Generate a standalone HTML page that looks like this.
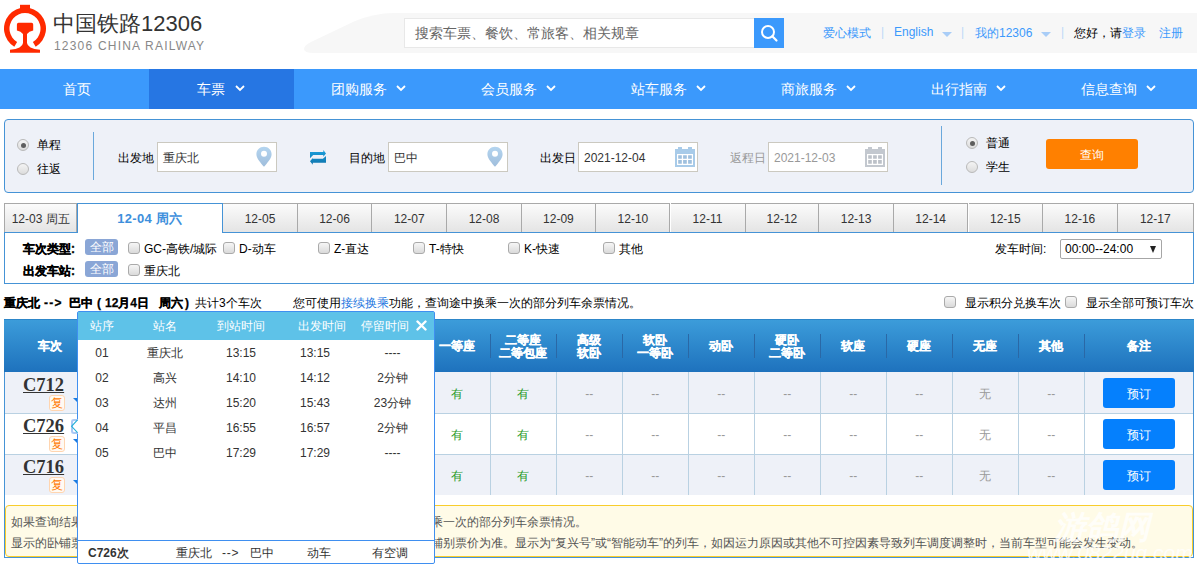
<!DOCTYPE html>
<html><head><meta charset="utf-8">
<style>
*{margin:0;padding:0;box-sizing:border-box}
html,body{width:1197px;height:567px;overflow:hidden;background:#fff}
body{font-family:"Liberation Sans",sans-serif;font-size:12px;color:#333;position:relative}
.a{position:absolute;white-space:nowrap}
/* header */
#hdr{position:absolute;left:0;top:0;width:1197px;height:69px;background:#fff}
#nav{position:absolute;left:0;top:69px;width:1197px;height:40px;background:#3b99fc}
#nav .it{position:absolute;top:0;height:40px;line-height:40px;color:#fff;font-size:14px;text-align:center}
#nav .act{background:#2676e3}
.chev{display:inline-block;width:7px;height:7px;border-right:2px solid #fff;border-bottom:2px solid #fff;transform:rotate(45deg);margin-left:10px;position:relative;top:-3px}

#sbox{position:absolute;left:4px;top:119px;width:1190px;height:74px;border:1px solid #4593d6;border-radius:4px;background:#eef1f8}
.lbl{position:absolute;font-size:12px;color:#000;white-space:nowrap;line-height:16px}
.inp{position:absolute;top:142px;height:30px;width:120px;border:1px solid #cbc9c0;background:#fff;font-size:12px;line-height:30px;padding-left:5px;color:#333}
.radio{position:absolute;width:12px;height:12px;border-radius:50%;border:1px solid #b9b9b9;background:linear-gradient(#f4f4f4,#dcdcdc)}
.radio.on::after{content:"";position:absolute;left:2.5px;top:2.5px;width:5px;height:5px;border-radius:50%;background:#5e5e5e}
.vdiv{position:absolute;width:1px;background:#6aa8dc}

.tab{position:absolute;top:203px;height:30px;border:1px solid #a9a9a9;border-left:0;border-bottom:0;background:linear-gradient(#fbfbfb,#e4e4e4);text-align:center;line-height:31px;font-size:12px;color:#333}
#fpanel{position:absolute;left:4px;top:232px;width:1190px;height:52px;border:1px solid #4593d6;background:#fff}
.flbl{position:absolute;font-size:12px;font-weight:bold;color:#000;-webkit-text-stroke:0.3px #000;line-height:14px}
.badge{position:absolute;left:85px;width:33px;height:16px;background:#8aa6d6;border-radius:3px;color:#fff;font-size:12px;line-height:16px;text-align:center}
.cb{position:absolute;width:12px;height:12px;border:1px solid #aaa;border-radius:3px;background:linear-gradient(#f6f6f6,#dadada)}
.ctx{position:absolute;font-size:12px;color:#000;line-height:14px}

.t12{position:absolute;font-size:12px;line-height:14px;white-space:nowrap;color:#000}
#rbox{position:absolute;left:4px;top:319px;width:1190px;height:239px;border:1px solid #4593d6;border-top:0}
#thead{position:absolute;left:4px;top:319px;width:1190px;height:53px;background:linear-gradient(#3c9cda,#1e72bd);border-top:1px solid #2d86c9}
.th{position:absolute;font-size:12px;font-weight:bold;color:#fff;-webkit-text-stroke:0.3px #fff;text-align:center;line-height:13px;white-space:nowrap}
.hsep{position:absolute;top:334px;width:1px;height:24px;background:#2a68a6}
.row{position:absolute;left:5px;width:1188px;height:41px}
.vl{position:absolute;width:1px;background:#b9d1e2}
.cell{position:absolute;font-size:12px;text-align:center;line-height:14px;white-space:nowrap}
.bk{position:absolute;left:1103px;width:72px;height:30px;background:#0580fd;border-radius:3px;color:#fff;font-size:12px;line-height:32px;text-align:center}
.tn{position:absolute;left:23px;font-family:"Liberation Serif",serif;font-weight:bold;font-size:18.5px;line-height:18px;color:#333;text-decoration:underline;text-underline-offset:1px}
.fu{position:absolute;left:49px;width:16px;height:16px;border:1px solid #ffd5b0;border-radius:3px;background:#fffaf3;color:#ff7a00;font-size:12px;line-height:14px;text-align:center}
.tri{position:absolute;left:73px;width:0;height:0;border-top:4px solid #1a7be0;border-left:4px solid transparent}

#pop{position:absolute;left:77px;top:311px;width:358px;height:253px;border:1px solid #3f8ff0;border-radius:2px;background:#fff}
#phead{position:absolute;left:78px;top:312px;width:356px;height:28px;background:#5ec2e8}
.pc{position:absolute;font-size:12px;line-height:14px;text-align:center;white-space:nowrap;color:#333}
.ph{color:#fff}
</style></head><body>
<div id="hdr">
  <svg class="a" style="left:0;top:0" width="50" height="56" viewBox="0 0 50 56">
    <rect x="20" y="4.8" width="10" height="5" fill="#ff2a00"/><path fill="#ff2a00" d="M35.69,46.68 A21,21 0 1 0 14.31,46.68 L17.11,41.94 A15.5,15.5 0 1 1 32.89,41.94 Z"/>
    <path fill="#ff2a00" d="M18.5,22.8 H31.6 Q33.2,22.8 33.2,24.4 V30.6 Q29,31.5 27,34 V43 Q27.5,48.5 40,49.8 V52.8 H10 V49.8 Q22.5,48.5 23,43 V34 Q21,31.5 16.9,30.6 V24.4 Q16.9,22.8 18.5,22.8 Z"/>
  </svg>
  <div class="a" style="left:53px;top:9px;font-size:22px;color:#333;letter-spacing:0">中国铁路12306</div>
  <div class="a" style="left:54px;top:39px;font-size:12px;color:#888;letter-spacing:1.2px">12306 CHINA RAILWAY</div>
  <svg class="a" style="left:300px;top:12px" width="897" height="42" viewBox="0 0 897 42">
    <path fill="#f7f7f7" d="M897,1 H94 Q74,1 54,9.5 L11,30 Q4,33.5 4,37 Q4,40.8 14,41 H897 Z"/>
  </svg>
  <div class="a" style="left:404px;top:18px;width:350px;height:30px;background:#fff;border:1px solid #e8e8e8;border-right:0"></div>
  <div class="a" style="left:415px;top:18px;height:30px;line-height:30px;font-size:14px;color:#666">搜索车票、餐饮、常旅客、相关规章</div>
  <div class="a" style="left:754px;top:18px;width:30px;height:30px;background:#3b99fc">
    <svg width="30" height="30" viewBox="0 0 30 30"><circle cx="14" cy="14" r="6" fill="none" stroke="#fff" stroke-width="2"/><path d="M18.3,18.3 L22.5,22.5" stroke="#fff" stroke-width="2.2" stroke-linecap="round"/></svg>
  </div>
  <div class="a" style="left:823px;top:25px;font-size:12px;color:#3b99fc">爱心模式</div>
  <div class="a" style="left:881px;top:25px;font-size:12px;color:#bcd9f8">|</div>
  <div class="a" style="left:894px;top:25px;font-size:12px;color:#3b99fc">English</div>
  <div class="a" style="left:942px;top:32px;width:0;height:0;border-left:5px solid transparent;border-right:5px solid transparent;border-top:5px solid #a9cdf7"></div>
  <div class="a" style="left:961px;top:25px;font-size:12px;color:#bcd9f8">|</div>
  <div class="a" style="left:975px;top:25px;font-size:12px;color:#3b99fc">我的12306</div>
  <div class="a" style="left:1041px;top:32px;width:0;height:0;border-left:5px solid transparent;border-right:5px solid transparent;border-top:5px solid #a9cdf7"></div>
  <div class="a" style="left:1061px;top:25px;font-size:12px;color:#bcd9f8">|</div>
  <div class="a" style="left:1074px;top:25px;font-size:12px;color:#000">您好，请<span style="color:#3b99fc">登录</span></div>
  <div class="a" style="left:1159px;top:25px;font-size:12px;color:#3b99fc">注册</div>
</div>
<div id="nav">
  <div class="a act" style="left:149px;top:0;width:145px;height:40px"></div>
  <div class="a" style="left:63.0px;top:0;height:40px;line-height:40px;color:#fff;font-size:14px">首页</div>
  <div class="a" style="left:197.0px;top:0;height:40px;line-height:40px;color:#fff;font-size:14px">车票</div>
  <svg class="a" style="left:234.5px;top:16px" width="10" height="7" viewBox="0 0 10 7"><path d="M1,1 L5,5 L9,1" fill="none" stroke="#fff" stroke-width="1.8"/></svg>
  <div class="a" style="left:330.6px;top:0;height:40px;line-height:40px;color:#fff;font-size:14px">团购服务</div>
  <svg class="a" style="left:396.1px;top:16px" width="10" height="7" viewBox="0 0 10 7"><path d="M1,1 L5,5 L9,1" fill="none" stroke="#fff" stroke-width="1.8"/></svg>
  <div class="a" style="left:480.6px;top:0;height:40px;line-height:40px;color:#fff;font-size:14px">会员服务</div>
  <svg class="a" style="left:546.1px;top:16px" width="10" height="7" viewBox="0 0 10 7"><path d="M1,1 L5,5 L9,1" fill="none" stroke="#fff" stroke-width="1.8"/></svg>
  <div class="a" style="left:630.6px;top:0;height:40px;line-height:40px;color:#fff;font-size:14px">站车服务</div>
  <svg class="a" style="left:696.1px;top:16px" width="10" height="7" viewBox="0 0 10 7"><path d="M1,1 L5,5 L9,1" fill="none" stroke="#fff" stroke-width="1.8"/></svg>
  <div class="a" style="left:780.6px;top:0;height:40px;line-height:40px;color:#fff;font-size:14px">商旅服务</div>
  <svg class="a" style="left:846.1px;top:16px" width="10" height="7" viewBox="0 0 10 7"><path d="M1,1 L5,5 L9,1" fill="none" stroke="#fff" stroke-width="1.8"/></svg>
  <div class="a" style="left:930.6px;top:0;height:40px;line-height:40px;color:#fff;font-size:14px">出行指南</div>
  <svg class="a" style="left:996.1px;top:16px" width="10" height="7" viewBox="0 0 10 7"><path d="M1,1 L5,5 L9,1" fill="none" stroke="#fff" stroke-width="1.8"/></svg>
  <div class="a" style="left:1080.6px;top:0;height:40px;line-height:40px;color:#fff;font-size:14px">信息查询</div>
  <svg class="a" style="left:1146.1px;top:16px" width="10" height="7" viewBox="0 0 10 7"><path d="M1,1 L5,5 L9,1" fill="none" stroke="#fff" stroke-width="1.8"/></svg>
</div>
<div id="sbox"></div>
<div class="radio on" style="left:17px;top:139px"></div>
<div class="radio" style="left:17px;top:163px"></div>
<div class="lbl" style="left:37px;top:137px">单程</div>
<div class="lbl" style="left:37px;top:161px">往返</div>
<div class="vdiv" style="left:93px;top:132px;height:48px"></div>
<div class="lbl" style="left:118px;top:150px">出发地</div>
<div class="inp" style="left:157px">重庆北</div>
<svg class="a" style="left:256px;top:146px" width="16" height="21" viewBox="0 0 16 21"><defs><linearGradient id="pg" x1="0" y1="0" x2="0" y2="1"><stop offset="0" stop-color="#b4d5f0"/><stop offset="1" stop-color="#9fbddb"/></linearGradient></defs><path fill="url(#pg)" fill-rule="evenodd" d="M8,0.8 C12.4,0.8 15.6,4 15.6,8.2 C15.6,12.6 11,17 8,20.8 C5,17 0.4,12.6 0.4,8.2 C0.4,4 3.6,0.8 8,0.8 Z M8,4.7 A3,3 0 1 0 8,10.7 A3,3 0 1 0 8,4.7 Z"/></svg>
<svg class="a" style="left:309px;top:150px" width="18" height="16" viewBox="0 0 18 16"><defs><linearGradient id="sg" x1="0" y1="0" x2="0" y2="1"><stop offset="0" stop-color="#1b9fdc"/><stop offset="1" stop-color="#0e74ad"/></linearGradient></defs><path fill="url(#sg)" d="M1,2.1 H14.3 V0.1 L17,3.4 L14.3,6.7 V5.1 H4.2 L1,8.2 Z M17,6 V12.8 H3.8 V14.8 L1,11.3 L3.8,8 V8.7 H13.9 Z"/></svg>
<div class="lbl" style="left:349px;top:150px">目的地</div>
<div class="inp" style="left:388px">巴中</div>
<svg class="a" style="left:487px;top:146px" width="16" height="21" viewBox="0 0 16 21"><path fill="url(#pg)" fill-rule="evenodd" d="M8,0.8 C12.4,0.8 15.6,4 15.6,8.2 C15.6,12.6 11,17 8,20.8 C5,17 0.4,12.6 0.4,8.2 C0.4,4 3.6,0.8 8,0.8 Z M8,4.7 A3,3 0 1 0 8,10.7 A3,3 0 1 0 8,4.7 Z"/></svg>
<div class="lbl" style="left:540px;top:150px">出发日</div>
<div class="inp" style="left:578px">2021-12-04</div>
<svg class="a cal" style="left:675px;top:147px" width="20" height="20" viewBox="0 0 20 20"><path fill="#a8cbe9" fill-rule="evenodd" d="M3,0 H7 V2 H13 V0 H17 V2 H20 V20 H0 V2 H3 Z M2,7 V18 H18 V7 Z"/><path fill="#9fc0de" d="M3.2,8.2 H6.8 V11.8 H3.2 Z M8.1,8.2 H11.8 V11.8 H8.1 Z M13.1,8.2 H16.8 V11.8 H13.1 Z M3.2,13.1 H6.8 V16.8 H3.2 Z M8.1,13.1 H11.8 V16.8 H8.1 Z M13.1,13.1 H16.8 V16.8 H13.1 Z"/></svg>
<div class="lbl" style="left:730px;top:150px;color:#999">返程日</div>
<div class="inp" style="left:768px;color:#999">2021-12-03</div>
<svg class="a" style="left:865px;top:147px" width="20" height="20" viewBox="0 0 20 20"><path fill="#c3c8cf" fill-rule="evenodd" d="M3,0 H7 V2 H13 V0 H17 V2 H20 V20 H0 V2 H3 Z M2,7 V18 H18 V7 Z"/><path fill="#bcc1c8" d="M3.2,8.2 H6.8 V11.8 H3.2 Z M8.1,8.2 H11.8 V11.8 H8.1 Z M13.1,8.2 H16.8 V11.8 H13.1 Z M3.2,13.1 H6.8 V16.8 H3.2 Z M8.1,13.1 H11.8 V16.8 H8.1 Z M13.1,13.1 H16.8 V16.8 H13.1 Z"/></svg>
<div class="vdiv" style="left:941px;top:126px;height:59px"></div>
<div class="radio on" style="left:966px;top:137px"></div>
<div class="radio" style="left:966px;top:161px"></div>
<div class="lbl" style="left:986px;top:135px">普通</div>
<div class="lbl" style="left:986px;top:159px">学生</div>
<div class="a" style="left:1046px;top:139px;width:92px;height:30px;background:#ff8000;border-radius:3px;color:#fff;font-size:12px;line-height:33px;text-align:center">查询</div>
<div id="fpanel"></div>
<div class="tab" style="left:4px;width:73.4px;border-left:1px solid #a9a9a9;height:29px">12-03 周五</div>
<div class="a" style="left:77.2px;top:203px;width:145.4px;height:30px;border:1px solid #4593d6;border-bottom:0;background:#fff;text-align:center;line-height:30px;font-size:13px;font-weight:bold;color:#3d8fdc;letter-spacing:0.3px">12-04 周六</div>
<div class="tab" style="left:223.2px;width:74.7px;height:29px">12-05</div>
<div class="tab" style="left:297.9px;width:74.3px;height:29px">12-06</div>
<div class="tab" style="left:372.2px;width:75.2px;height:29px">12-07</div>
<div class="tab" style="left:447.4px;width:74.2px;height:29px">12-08</div>
<div class="tab" style="left:521.6px;width:74.7px;height:29px">12-09</div>
<div class="tab" style="left:596.3px;width:74.2px;height:29px">12-10</div>
<div class="tab" style="left:670.5px;width:75.0px;height:29px">12-11</div>
<div class="tab" style="left:745.5px;width:73.9px;height:29px">12-12</div>
<div class="tab" style="left:819.4px;width:74.4px;height:29px">12-13</div>
<div class="tab" style="left:893.8px;width:74.7px;height:29px">12-14</div>
<div class="tab" style="left:968.5px;width:74.7px;height:29px">12-15</div>
<div class="tab" style="left:1043.2px;width:74.4px;height:29px">12-16</div>
<div class="tab" style="left:1117.6px;width:76.4px;height:29px">12-17</div>
<div class="flbl" style="left:23px;top:242px">车次类型:</div>
<div class="badge" style="top:239px">全部</div>
<div class="flbl" style="left:23px;top:264px">出发车站:</div>
<div class="badge" style="top:261px">全部</div>
<div class="cb" style="left:128px;top:242px"></div><div class="ctx" style="left:144px;top:242px">GC-高铁/城际</div>
<div class="cb" style="left:223px;top:242px"></div><div class="ctx" style="left:239px;top:242px">D-动车</div>
<div class="cb" style="left:318px;top:242px"></div><div class="ctx" style="left:334px;top:242px">Z-直达</div>
<div class="cb" style="left:413px;top:242px"></div><div class="ctx" style="left:429px;top:242px">T-特快</div>
<div class="cb" style="left:508px;top:242px"></div><div class="ctx" style="left:524px;top:242px">K-快速</div>
<div class="cb" style="left:603px;top:242px"></div><div class="ctx" style="left:619px;top:242px">其他</div>
<div class="cb" style="left:128px;top:264px"></div><div class="ctx" style="left:144px;top:264px">重庆北</div>
<div class="ctx" style="left:995px;top:242px">发车时间:</div>
<div class="a" style="left:1060px;top:239px;width:102px;height:20px;border:1px solid #a6a6a6;border-radius:2px;background:#fff;font-size:12px;line-height:18px;padding-left:4px;color:#000">00:00--24:00</div>
<div class="a" style="left:1150px;top:246px;width:0;height:0;border-left:3.5px solid transparent;border-right:3.5px solid transparent;border-top:7px solid #222"></div>
<div class="t12" style="left:4px;top:296px;font-weight:bold;-webkit-text-stroke:0.25px #000">重庆北</div>
<div class="t12" style="left:44px;top:296px;font-weight:bold;-webkit-text-stroke:0.25px #000"><span style="letter-spacing:1.2px">--&gt;</span></div>
<div class="t12" style="left:69px;top:296px;font-weight:bold;-webkit-text-stroke:0.25px #000">巴中</div>
<div class="t12" style="left:97px;top:296px;font-weight:bold;-webkit-text-stroke:0.25px #000">(</div>
<div class="t12" style="left:105px;top:296px;font-weight:bold;-webkit-text-stroke:0.25px #000">12月4日</div>
<div class="t12" style="left:159px;top:296px;font-weight:bold;-webkit-text-stroke:0.25px #000">周六</div>
<div class="t12" style="left:185px;top:296px;font-weight:bold;-webkit-text-stroke:0.25px #000">)</div>
<div class="t12" style="left:195px;top:296px">共计3个车次</div>
<div class="t12" style="left:293px;top:296px">您可使用<span style="color:#1c76e0">接续换乘</span>功能，查询途中换乘一次的部分列车余票情况。</div>
<div class="cb" style="left:944px;top:296px"></div><div class="t12" style="left:965px;top:296px">显示积分兑换车次</div>
<div class="cb" style="left:1065px;top:296px"></div><div class="t12" style="left:1086px;top:296px">显示全部可预订车次</div>
<div id="rbox"></div>
<div id="thead"></div>
<div class="th" style="left:4px;width:92px;top:340px">车次</div>
<div class="th" style="left:424.3px;width:66px;top:340px">一等座</div>
<div class="hsep" style="left:490.3px"></div>
<div class="th" style="left:490.3px;width:66px;top:334px">二等座<br>二等包座</div>
<div class="hsep" style="left:556.3px"></div>
<div class="th" style="left:556.3px;width:66px;top:334px">高级<br>软卧</div>
<div class="hsep" style="left:622.3px"></div>
<div class="th" style="left:622.3px;width:66px;top:334px">软卧<br>一等卧</div>
<div class="hsep" style="left:688.3px"></div>
<div class="th" style="left:688.3px;width:66px;top:340px">动卧</div>
<div class="hsep" style="left:754.3px"></div>
<div class="th" style="left:754.3px;width:66px;top:334px">硬卧<br>二等卧</div>
<div class="hsep" style="left:820.3px"></div>
<div class="th" style="left:820.3px;width:66px;top:340px">软座</div>
<div class="hsep" style="left:886.3px"></div>
<div class="th" style="left:886.3px;width:66px;top:340px">硬座</div>
<div class="hsep" style="left:952.3px"></div>
<div class="th" style="left:952.3px;width:66px;top:340px">无座</div>
<div class="hsep" style="left:1018.3px"></div>
<div class="th" style="left:1018.3px;width:66px;top:340px">其他</div>
<div class="hsep" style="left:1084.3px"></div>
<div class="th" style="left:1084.3px;width:109px;top:340px">备注</div>
<div class="row" style="top:372px;background:#eef1f8"></div>
<div class="row" style="top:413px;background:#fff"></div>
<div class="row" style="top:454px;background:#eef1f8"></div>
<div class="a" style="left:5px;top:413px;width:1188px;height:1px;background:#b9d1e2"></div>
<div class="a" style="left:5px;top:454px;width:1188px;height:1px;background:#b9d1e2"></div>
<div class="vl" style="left:424.3px;top:372px;height:123px"></div>
<div class="vl" style="left:490.3px;top:372px;height:123px"></div>
<div class="vl" style="left:556.3px;top:372px;height:123px"></div>
<div class="vl" style="left:622.3px;top:372px;height:123px"></div>
<div class="vl" style="left:688.3px;top:372px;height:123px"></div>
<div class="vl" style="left:754.3px;top:372px;height:123px"></div>
<div class="vl" style="left:820.3px;top:372px;height:123px"></div>
<div class="vl" style="left:886.3px;top:372px;height:123px"></div>
<div class="vl" style="left:952.3px;top:372px;height:123px"></div>
<div class="vl" style="left:1018.3px;top:372px;height:123px"></div>
<div class="vl" style="left:1084.3px;top:372px;height:123px"></div>
<div class="tn" style="top:375.5px">C712</div>
<div class="fu" style="top:395px">复</div>
<div class="tri" style="top:398px"></div>
<div class="cell" style="left:424.3px;width:66px;top:387px;color:#1f9a1f">有</div>
<div class="cell" style="left:490.3px;width:66px;top:387px;color:#1f9a1f">有</div>
<div class="cell" style="left:556.3px;width:66px;top:387px;color:#999">--</div>
<div class="cell" style="left:622.3px;width:66px;top:387px;color:#999">--</div>
<div class="cell" style="left:688.3px;width:66px;top:387px;color:#999">--</div>
<div class="cell" style="left:754.3px;width:66px;top:387px;color:#999">--</div>
<div class="cell" style="left:820.3px;width:66px;top:387px;color:#999">--</div>
<div class="cell" style="left:886.3px;width:66px;top:387px;color:#999">--</div>
<div class="cell" style="left:952.3px;width:66px;top:387px;color:#999">无</div>
<div class="cell" style="left:1018.3px;width:66px;top:387px;color:#999">--</div>
<div class="bk" style="top:378px">预订</div>
<div class="tn" style="top:416.5px">C726</div>
<div class="fu" style="top:436px">复</div>
<div class="tri" style="top:439px"></div>
<div class="cell" style="left:424.3px;width:66px;top:428px;color:#1f9a1f">有</div>
<div class="cell" style="left:490.3px;width:66px;top:428px;color:#1f9a1f">有</div>
<div class="cell" style="left:556.3px;width:66px;top:428px;color:#999">--</div>
<div class="cell" style="left:622.3px;width:66px;top:428px;color:#999">--</div>
<div class="cell" style="left:688.3px;width:66px;top:428px;color:#999">--</div>
<div class="cell" style="left:754.3px;width:66px;top:428px;color:#999">--</div>
<div class="cell" style="left:820.3px;width:66px;top:428px;color:#999">--</div>
<div class="cell" style="left:886.3px;width:66px;top:428px;color:#999">--</div>
<div class="cell" style="left:952.3px;width:66px;top:428px;color:#999">无</div>
<div class="cell" style="left:1018.3px;width:66px;top:428px;color:#999">--</div>
<div class="bk" style="top:419px">预订</div>
<div class="tn" style="top:457.5px">C716</div>
<div class="fu" style="top:477px">复</div>
<div class="tri" style="top:480px"></div>
<div class="cell" style="left:424.3px;width:66px;top:469px;color:#1f9a1f">有</div>
<div class="cell" style="left:490.3px;width:66px;top:469px;color:#1f9a1f">有</div>
<div class="cell" style="left:556.3px;width:66px;top:469px;color:#999">--</div>
<div class="cell" style="left:622.3px;width:66px;top:469px;color:#999">--</div>
<div class="cell" style="left:688.3px;width:66px;top:469px;color:#999">--</div>
<div class="cell" style="left:754.3px;width:66px;top:469px;color:#999">--</div>
<div class="cell" style="left:820.3px;width:66px;top:469px;color:#999">--</div>
<div class="cell" style="left:886.3px;width:66px;top:469px;color:#999">--</div>
<div class="cell" style="left:952.3px;width:66px;top:469px;color:#999">无</div>
<div class="cell" style="left:1018.3px;width:66px;top:469px;color:#999">--</div>
<div class="bk" style="top:460px">预订</div>
<div class="a" style="left:5px;top:505px;width:1188px;height:52px;background:#fffbe7;border:1px solid #f8cd2c;border-radius:4px"></div>
<div class="t12" style="left:11px;top:515px;color:#555">如果查询结果中没有满足需求的车次，您还可以使用接续换乘功能，查询途中换乘一次的部分列车余票情况。</div>
<div class="t12" style="left:11px;top:536px;color:#555">显示的卧铺票价均为上铺票价，供您参考。具体票价以您确认支付时实际购买的铺别票价为准。显示为“复兴号”或“智能动车”的列车，如因运力原因或其他不可控因素导致列车调度调整时，当前车型可能会发生变动。</div>
<div id="pop"></div>
<div id="phead"></div>
<div class="pc ph" style="left:62.0px;width:80px;top:319px">站序</div>
<div class="pc ph" style="left:124.5px;width:80px;top:319px">站名</div>
<div class="pc ph" style="left:201.0px;width:80px;top:319px">到站时间</div>
<div class="pc ph" style="left:282.0px;width:80px;top:319px">出发时间</div>
<div class="pc ph" style="left:344.5px;width:80px;top:319px">停留时间</div>
<svg class="a" style="left:416px;top:320px" width="11" height="11" viewBox="0 0 11 11"><path d="M1.5,1.5 L9.5,9.5 M9.5,1.5 L1.5,9.5" stroke="#fff" stroke-width="2.4" stroke-linecap="round"/></svg>
<div class="pc" style="left:62.0px;width:80px;top:345.5px">01</div>
<div class="pc" style="left:124.5px;width:80px;top:345.5px">重庆北</div>
<div class="pc" style="left:201.0px;width:80px;top:345.5px">13:15</div>
<div class="pc" style="left:275.0px;width:80px;top:345.5px">13:15</div>
<div class="pc" style="left:352.5px;width:80px;top:345.5px">----</div>
<div class="pc" style="left:62.0px;width:80px;top:370.5px">02</div>
<div class="pc" style="left:124.5px;width:80px;top:370.5px">高兴</div>
<div class="pc" style="left:201.0px;width:80px;top:370.5px">14:10</div>
<div class="pc" style="left:275.0px;width:80px;top:370.5px">14:12</div>
<div class="pc" style="left:352.5px;width:80px;top:370.5px">2分钟</div>
<div class="pc" style="left:62.0px;width:80px;top:395.5px">03</div>
<div class="pc" style="left:124.5px;width:80px;top:395.5px">达州</div>
<div class="pc" style="left:201.0px;width:80px;top:395.5px">15:20</div>
<div class="pc" style="left:275.0px;width:80px;top:395.5px">15:43</div>
<div class="pc" style="left:352.5px;width:80px;top:395.5px">23分钟</div>
<div class="pc" style="left:62.0px;width:80px;top:420.5px">04</div>
<div class="pc" style="left:124.5px;width:80px;top:420.5px">平昌</div>
<div class="pc" style="left:201.0px;width:80px;top:420.5px">16:55</div>
<div class="pc" style="left:275.0px;width:80px;top:420.5px">16:57</div>
<div class="pc" style="left:352.5px;width:80px;top:420.5px">2分钟</div>
<div class="pc" style="left:62.0px;width:80px;top:445.5px">05</div>
<div class="pc" style="left:124.5px;width:80px;top:445.5px">巴中</div>
<div class="pc" style="left:201.0px;width:80px;top:445.5px">17:29</div>
<div class="pc" style="left:275.0px;width:80px;top:445.5px">17:29</div>
<div class="pc" style="left:352.5px;width:80px;top:445.5px">----</div>
<div class="a" style="left:78px;top:540px;width:356px;height:1px;background:#3f8ff0"></div>
<div class="pc" style="left:88px;top:546px;text-align:left;font-weight:bold">C726次</div>
<div class="pc" style="left:176px;top:546px;text-align:left">重庆北</div><div class="pc" style="left:222px;top:546px;text-align:left;letter-spacing:0.8px">--&gt;</div><div class="pc" style="left:250px;top:546px;text-align:left">巴中</div>
<div class="pc" style="left:307px;top:546px;text-align:left">动车</div>
<div class="pc" style="left:372px;top:546px;text-align:left">有空调</div>
<div class="a" style="left:70.5px;top:419px;width:7.5px;height:14.5px;border:2px solid #a9c8f5;border-right:0;border-radius:3px 0 0 3px;background:#fff"></div>
<div class="a" style="left:77px;top:421px;width:1px;height:11px;background:#fff"></div>
<svg class="a" style="left:70px;top:419px" width="9" height="15" viewBox="0 0 9 15"><path d="M7.5,0.8 L1.6,7.3 L7.5,13.6" fill="none" stroke="#22b0d8" stroke-width="1.1"/></svg>
<div class="a" style="left:1054px;top:508px;font-size:32px;line-height:38px;font-style:italic;font-weight:bold;color:rgba(255,255,255,0.75)">游鸽网</div>
<div class="a" style="left:1027px;top:542px;font-size:21px;line-height:22px;font-style:italic;color:rgba(255,255,255,0.8)">www.0822ug.com</div>
</body></html>
